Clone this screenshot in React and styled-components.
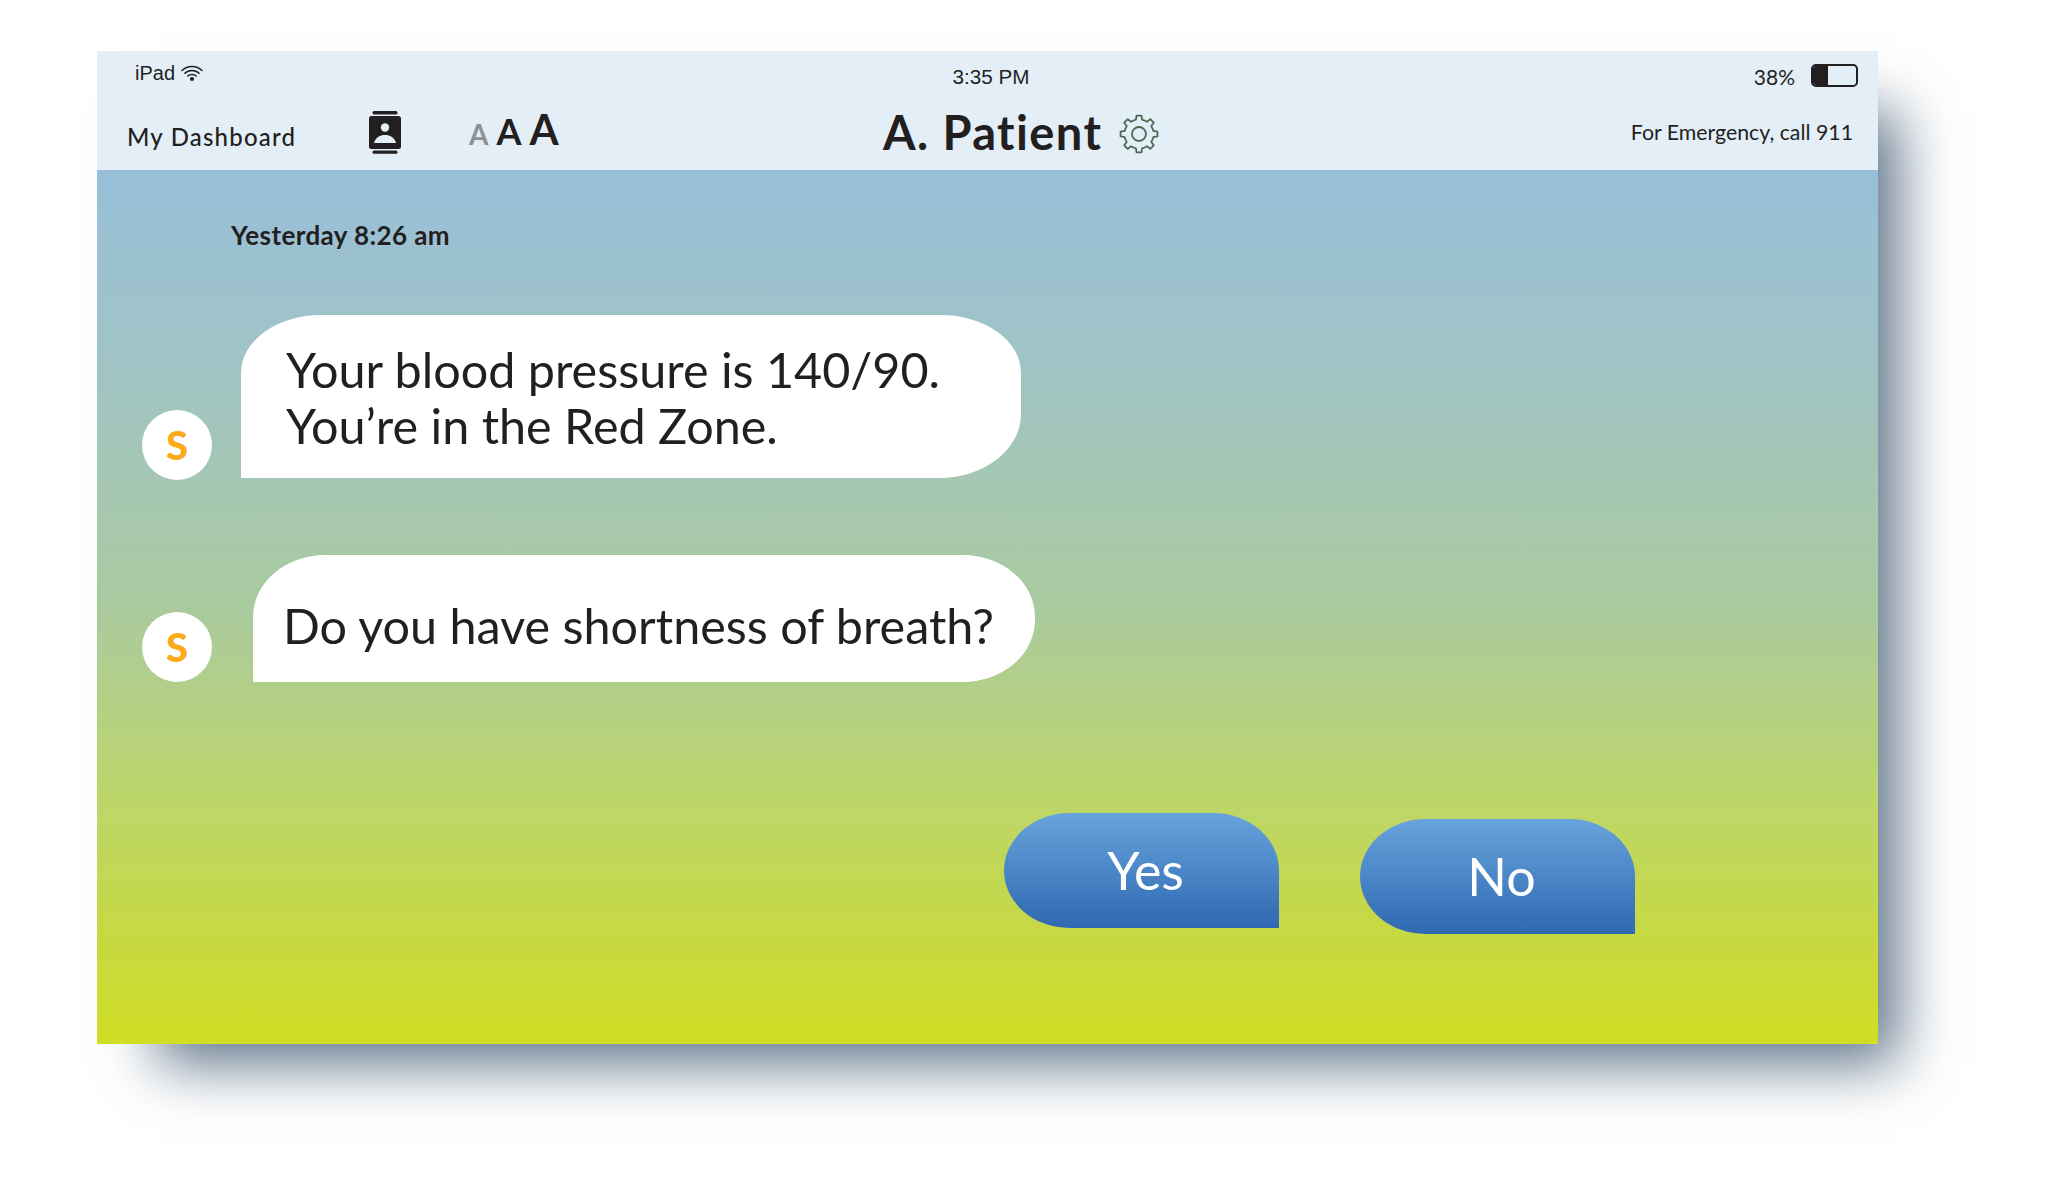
import React from "react";
import styled, { createGlobalStyle } from "styled-components";

const GlobalStyle = createGlobalStyle`
  html, body {
    margin: 0;
    padding: 0;
    background: #fff;
  }
`;

// gear outline, 8 teeth
const gearPath = () => {
  const pts = [];
  const teeth = 8;
  const step = (Math.PI * 2) / teeth;
  for (let i = 0; i < teeth; i++) {
    const a = i * step - Math.PI / 2;
    const list = [
      [-0.5, 14.6],
      [-0.27, 14.6],
      [-0.17, 18.6],
      [0.17, 18.6],
      [0.27, 14.6],
    ];
    list.forEach(([o, r]) => {
      const t = a + o * step;
      pts.push(`${(20 + r * Math.cos(t)).toFixed(2)} ${(20 + r * Math.sin(t)).toFixed(2)}`);
    });
  }
  return "M" + pts.join("L") + "Z";
};

function App() {
  return (
    <Page>
      <GlobalStyle />
      <Screen>
        <Header>
          <StatusBar>
            <Carrier>
              iPad
              <svg width="24" height="19" viewBox="0 0 22 18" fill="none" stroke="#231f20" strokeWidth="1.4" strokeLinecap="round">
                <path d="M1.500 6.200C6.700 1 15.300 1 20.500 6.200" />
                <path d="M4.200 8.800c3.700-3.600 9.900-3.600 13.600 0" />
                <path d="M7 11.400c2.200-2 5.800-2 8 0" />
                <circle cx="11" cy="14.200" r="2" fill="#231f20" stroke="none" />
              </svg>
            </Carrier>
            <Clock>3:35 PM</Clock>
            <BatteryWrap>
              <BatteryText>38%</BatteryText>
              <Battery>
                <BatteryLevel />
              </Battery>
            </BatteryWrap>
          </StatusBar>
          <NavBar>
            <NavLeft>
              <DashboardLink>My Dashboard</DashboardLink>
              <svg width="32" height="43" viewBox="0 0 32 43">
                <rect x="3.500" y="0" width="25" height="3.400" rx="1.500" fill="#231f20" />
                <rect x="0" y="5" width="32" height="33" rx="2.500" fill="#231f20" />
                <rect x="3.500" y="39.400" width="25" height="3.400" rx="1.500" fill="#231f20" />
                <circle cx="16" cy="16.500" r="4.200" fill="#e3eef7" />
                <path d="M5 32c1.400-5.600 6-8 11-8s9.600 2.400 11 8z" fill="#e3eef7" />
              </svg>
              <SizePicker>
                <SizeLetter size={28} muted>A</SizeLetter>
                <SizeLetter size={36}>A</SizeLetter>
                <SizeLetter size={42}>A</SizeLetter>
              </SizePicker>
            </NavLeft>
            <PatientBlock>
              <PatientName>A. Patient</PatientName>
              <GearIcon width="40" height="40" viewBox="0 0 40 40" fill="none" stroke="#4b6a53" strokeWidth="1.8" strokeLinejoin="round">
                <path d={gearPath()} />
                <circle cx="20" cy="20" r="7" />
              </GearIcon>
            </PatientBlock>
            <EmergencyNote>For Emergency, call 911</EmergencyNote>
          </NavBar>
        </Header>
        <Chat>
          <Timestamp>Yesterday 8:26 am</Timestamp>
          <MessageRow top={64} gap={29}>
            <Avatar drop={2}>S</Avatar>
            <FirstBubble>
              Your blood pressure is 140/90.
              <br />
              You’re in the Red Zone.
            </FirstBubble>
          </MessageRow>
          <MessageRow top={77} gap={41}>
            <Avatar>S</Avatar>
            <SecondBubble>Do you have shortness of breath?</SecondBubble>
          </MessageRow>
          <Answers>
            <AnswerButton>Yes</AnswerButton>
            <AnswerButton lower>No</AnswerButton>
          </Answers>
        </Chat>
      </Screen>
    </Page>
  );
}

const Page = styled.div`
  width: 2048px;
  height: 1204px;
  padding: 51px 0 0 97px;
  box-sizing: border-box;
  overflow: hidden;
  background: #fff;
`;

const Screen = styled.div`
  width: 1781px;
  height: 993px;
  display: flex;
  flex-direction: column;
  box-shadow: 40px 40px 56px -20px #5e7388;
  font-family: "Lato", sans-serif;
  font-variant-ligatures: none;
  color: #231f20;
`;

const Header = styled.header`
  height: 119px;
  background: #e3eef7;
  display: flex;
  flex-direction: column;
`;

const StatusBar = styled.div`
  height: 50px;
  display: grid;
  grid-template-columns: 1fr 1fr 1fr;
  align-items: start;
  font-family: "Liberation Sans", sans-serif;
  font-size: 20px;
`;

const Carrier = styled.div`
  display: flex;
  align-items: center;
  gap: 5px;
  padding: 11px 0 0 38px;
  line-height: 22px;
`;

const Clock = styled.div`
  text-align: center;
  padding: 15px 0 0 7px;
  font-size: 20.700px;
  line-height: 22px;
`;

const BatteryWrap = styled.div`
  display: flex;
  justify-content: flex-end;
  align-items: center;
  gap: 16px;
  padding: 12px 20px 0 0;
  font-family: "Lato", sans-serif;
  font-size: 21px;
  line-height: 23px;
`;

const BatteryText = styled.span`
  margin-top: 2px;
`;

const Battery = styled.div`
  width: 47px;
  height: 23px;
  box-sizing: border-box;
  border: 2px solid #231f20;
  border-radius: 5px;
  overflow: hidden;
`;

const BatteryLevel = styled.div`
  width: 15px;
  height: 100%;
  background: #231f20;
`;

const NavBar = styled.div`
  flex: 1;
  display: flex;
  align-items: flex-start;
`;

const NavLeft = styled.div`
  width: 786px;
  display: flex;
  align-items: flex-start;
  padding: 10px 0 0 30px;
  box-sizing: border-box;
`;

const DashboardLink = styled.div`
  width: 242px;
  margin-top: 11px;
  font-size: 24px;
  line-height: 29px;
  letter-spacing: 1.200px;
  font-weight: 500;
`;

const SizePicker = styled.div`
  display: flex;
  align-items: baseline;
  gap: 8px;
  margin: -5px 0 0 68px;
  height: 46px;
`;

const SizeLetter = styled.span`
  font-size: ${(p) => p.size}px;
  line-height: 46px;
  font-weight: 700;
  color: ${(p) => (p.muted ? "#8e9093" : "#231f20")};
`;

const PatientBlock = styled.div`
  display: flex;
  align-items: center;
  gap: 17px;
  padding-top: 8px;
`;

const PatientName = styled.div`
  font-size: 47px;
  line-height: 46px;
  letter-spacing: 1.400px;
  font-weight: 700;
`;

const GearIcon = styled.svg`
  margin-top: 3px;
`;

const EmergencyNote = styled.div`
  margin-left: auto;
  padding: 17px 25px 0 0;
  font-size: 21.300px;
  line-height: 28px;
`;

const Chat = styled.main`
  flex: 1;
  padding-top: 49px;
  background: linear-gradient(
    180deg,
    #98bfd9 0%,
    #a0c4c6 22%,
    #aaca9f 50%,
    #bdd66a 72%,
    #c8d93c 90%,
    #d1de24 100%
  );
`;

const Timestamp = styled.div`
  padding-left: 134px;
  font-size: 26px;
  line-height: 32px;
  letter-spacing: 0.400px;
  font-weight: 700;
`;

const MessageRow = styled.div`
  display: flex;
  align-items: flex-end;
  gap: ${(p) => p.gap}px;
  margin-top: ${(p) => p.top}px;
  padding-left: 45px;
`;

const Avatar = styled.div`
  width: 70px;
  height: 70px;
  margin-bottom: ${(p) => (p.drop ? -p.drop : 0)}px;
  flex: none;
  border-radius: 50%;
  background: #fff;
  color: #fbaa19;
  font-size: 40px;
  font-weight: 900;
  line-height: 70px;
  text-align: center;
`;

const FirstBubble = styled.div`
  width: 780px;
  height: 163px;
  box-sizing: border-box;
  padding: 26px 0 0 45px;
  background: #fff;
  border-radius: 80px 80px 82px 0 / 58px 58px 64px 0;
  font-size: 48.500px;
  line-height: 56px;
`;

const SecondBubble = styled.div`
  width: 782px;
  height: 127px;
  box-sizing: border-box;
  padding: 42px 0 0 30px;
  background: #fff;
  border-radius: 72px 72px 72px 0 / 62px 62px 62px 0;
  font-size: 48.500px;
  line-height: 56px;
`;

const Answers = styled.div`
  display: flex;
  align-items: flex-start;
  gap: 81px;
  margin-top: 131px;
  padding-left: 907px;
`;

const AnswerButton = styled.button`
  width: 275px;
  height: 115px;
  margin-top: ${(p) => (p.lower ? 6 : 0)}px;
  padding: 0 0 2px 8px;
  border: 0;
  border-radius: 66px 66px 0 66px / 58px 58px 0 58px;
  background: linear-gradient(180deg, #68a3dc 0%, #2e69b2 100%);
  color: #fff;
  font-family: "Lato", sans-serif;
  font-size: 52px;
`;

export default App;
